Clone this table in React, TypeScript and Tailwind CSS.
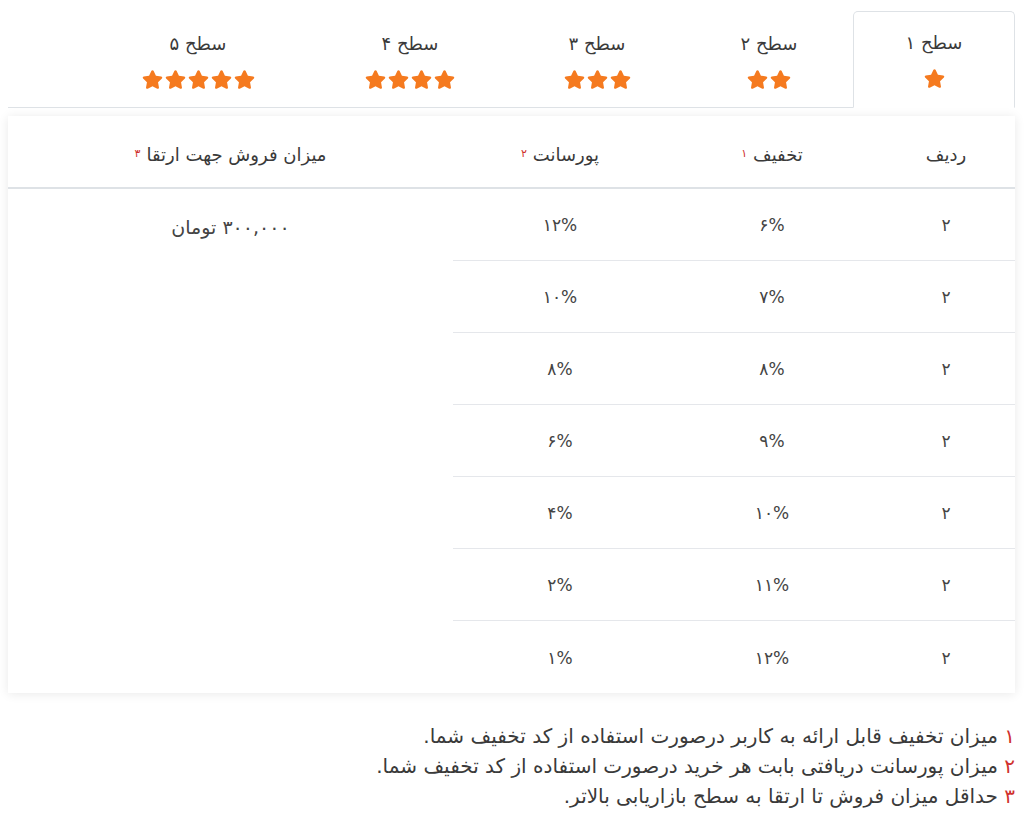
import React from "react";

const TABS = [
  { label: "سطح ۱", stars: 1, width: "w-[162px]", active: true },
  { label: "سطح ۲", stars: 2, width: "w-[168px]", active: false },
  { label: "سطح ۳", stars: 3, width: "w-[176px]", active: false },
  { label: "سطح ۴", stars: 4, width: "w-[198px]", active: false },
  { label: "سطح ۵", stars: 5, width: "w-[226px]", active: false },
];

const ROWS = [
  { row: "۲", discount: "۶%", commission: "۱۲%" },
  { row: "۲", discount: "۷%", commission: "۱۰%" },
  { row: "۲", discount: "۸%", commission: "۸%" },
  { row: "۲", discount: "۹%", commission: "۶%" },
  { row: "۲", discount: "۱۰%", commission: "۴%" },
  { row: "۲", discount: "۱۱%", commission: "۲%" },
  { row: "۲", discount: "۱۲%", commission: "۱%" },
];

const NOTES = [
  { n: "۱", text: "میزان تخفیف قابل ارائه به کاربر درصورت استفاده از کد تخفیف شما." },
  { n: "۲", text: "میزان پورسانت دریافتی بابت هر خرید درصورت استفاده از کد تخفیف شما." },
  { n: "۳", text: "حداقل میزان فروش تا ارتقا به سطح بازاریابی بالاتر." },
];

function Star() {
  return (
    <svg viewBox="0 0 576 512" className="w-[21px] h-[19px]" fill="#f57a1f">
      <path d="M259.3 17.8L194 150.2 47.9 171.5c-26.2 3.8-36.7 36.1-17.7 54.6l105.7 103-25 145.5c-4.5 26.3 23.2 46 46.4 33.7L288 439.6l130.7 68.7c23.2 12.2 50.9-7.4 46.4-33.7l-25-145.5 105.7-103c19-18.5 8.5-50.8-17.7-54.6L382 150.2 316.7 17.8c-11.7-23.6-45.6-23.9-57.4 0z" />
    </svg>
  );
}

function Sup({ n }: { n: string }) {
  return <sup className="text-[11px] text-[#d0312d] mr-[6px] relative -top-[4px]">{n}</sup>;
}

export default function App() {
  return (
    <div
      dir="rtl"
      className="min-h-[835px] bg-white pt-[11px] pr-[9px] pl-[8px] text-[#3a3a3a]"
      style={{ fontFamily: "'DejaVu Sans', sans-serif" }}
    >
      {/* Level tabs */}
      <ul className="flex border-b border-[#dee2e6]">
        {TABS.map((t) => (
          <li
            key={t.label}
            className={
              t.active
                ? `${t.width} -mb-px flex flex-col items-center pt-[18px] pb-[17px] bg-white border border-[#dee2e6] border-b-white rounded-t-[5px]`
                : `${t.width} flex flex-col items-center pt-[19px] pb-[17px] border border-transparent`
            }
          >
            <span className="text-[18px] leading-[26px]">{t.label}</span>
            <div dir="ltr" className="flex gap-[2px] mt-[13px]">
              {Array.from({ length: t.stars }).map((_, i) => (
                <Star key={i} />
              ))}
            </div>
          </li>
        ))}
      </ul>

      {/* Level table */}
      <div className="mt-[8px] bg-white shadow-[0_1px_10px_rgba(0,0,0,0.09)]">
        <div className="flex h-[73px] items-center pt-[6px] border-b-2 border-[#dee2e6] text-[18px]">
          <div className="w-[138px] text-center">ردیف</div>
          <div className="w-[210px] text-center">
            تخفیف<Sup n="۱" />
          </div>
          <div className="w-[214px] text-center">
            پورسانت<Sup n="۲" />
          </div>
          <div className="flex-1 text-center">
            میزان فروش جهت ارتقا<Sup n="۳" />
          </div>
        </div>

        <div className="flex text-[17px] text-[#444]">
          <div className="w-[562px]">
            {ROWS.map((r, i) => (
              <div
                key={i}
                className={`flex h-[72px] items-center pt-[3px] ${i < ROWS.length - 1 ? "border-b border-[#e5e7eb]" : ""}`}
              >
                <div className="w-[138px] text-center">{r.row}</div>
                <div className="w-[210px] text-center">{r.discount}</div>
                <div className="w-[214px] text-center">{r.commission}</div>
              </div>
            ))}
          </div>
          <div className="flex-1 text-center pt-[24px] text-[19px]">۳۰۰,۰۰۰ تومان</div>
        </div>
      </div>

      {/* Footnotes */}
      <div className="mt-[28px] text-[20px] leading-[30px]">
        {NOTES.map((note) => (
          <p key={note.n}>
            <span className="text-[#d0312d]">{note.n}</span> {note.text}
          </p>
        ))}
      </div>
    </div>
  );
}
